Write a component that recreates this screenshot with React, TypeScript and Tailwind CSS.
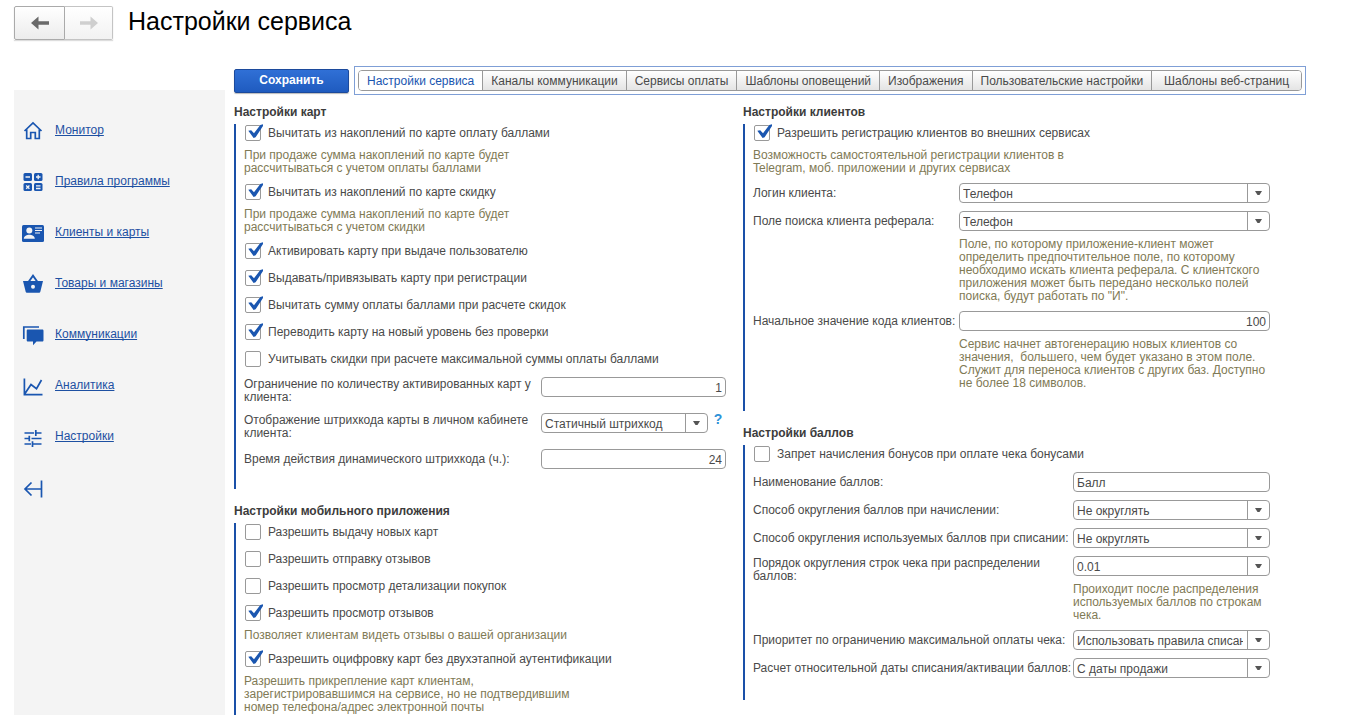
import { useId, type ReactNode } from 'react'
import clsx from 'clsx'

const TABS = [
  'Настройки сервиса',
  'Каналы коммуникации',
  'Сервисы оплаты',
  'Шаблоны оповещений',
  'Изображения',
  'Пользовательские настройки',
  'Шаблоны веб-страниц',
]

function Icon({ children }: { children: ReactNode }) {
  return (
    <svg width="24" height="24" viewBox="0 0 24 24" fill="none" stroke="#1a56b0" strokeWidth="1.7" aria-hidden="true" className="shrink-0">
      {children}
    </svg>
  )
}

const NAV = [
  {
    label: 'Монитор',
    icon: (
      <Icon>
        <path d="M3.5 11 12 3l8.5 8M5.7 9.500v9h4v-6h4.600v6h4v-9" />
      </Icon>
    ),
  },
  {
    label: 'Правила программы',
    icon: (
      <Icon>
        <g fill="#1a56b0" stroke="none">
          <rect x="2.5" y="2" width="8.500" height="8" rx="1.5" />
          <rect x="13" y="2" width="8.500" height="8" rx="1.5" />
          <rect x="2.5" y="12" width="8.500" height="8" rx="1.5" />
          <rect x="13" y="12" width="8.500" height="8" rx="1.5" />
        </g>
        <path d="M4.500 6H9M15 6h4.500M17.200 3.800v4.400M5.200 14.500l3.200 3.200M8.400 14.500l-3.200 3.200M15 14.800h4.500M15 17.500h4.500" stroke="#f4f4f4" strokeWidth="1.300" />
      </Icon>
    ),
  },
  {
    label: 'Клиенты и карты',
    icon: (
      <Icon>
        <rect x="1" y="3" width="22" height="17" rx="1.5" fill="#1a56b0" stroke="none" />
        <circle cx="8.3" cy="8.500" r="3" fill="#f4f4f4" stroke="none" />
        <path d="M2.800 16.800c0-2.600 3.200-4 5.500-4s5.500 1.400 5.500 4z" fill="#f4f4f4" stroke="none" />
        <path d="M14 6h7M14 8.500h7M14 11h5" stroke="#f4f4f4" strokeWidth="1.1" />
      </Icon>
    ),
  },
  {
    label: 'Товары и магазины',
    icon: (
      <Icon>
        <path d="M7.500 9 12 2.700 16.500 9" strokeWidth="1.9" />
        <path d="M2 8h20l-2.600 10.400c-.2.8-.8 1.300-1.600 1.300H6.200c-.8 0-1.400-.5-1.600-1.300z" fill="#1a56b0" stroke="none" />
        <circle cx="12" cy="13.700" r="2" fill="#f4f4f4" stroke="none" />
      </Icon>
    ),
  },
  {
    label: 'Коммуникации',
    icon: (
      <Icon>
        <path d="M2.800 15V3H18" />
        <path d="M7 5.500h14.200c.8 0 1.300.5 1.300 1.300v9.400c0 .8-.5 1.300-1.300 1.300H15.500L12 21.200V17.500H7c-.8 0-1.300-.5-1.300-1.300V6.800C5.700 6 6.200 5.500 7 5.500z" fill="#1a56b0" stroke="none" />
      </Icon>
    ),
  },
  {
    label: 'Аналитика',
    icon: (
      <Icon>
        <path d="M3.400 3.500v16.200H21.500M4 18.500 10 9.500l5.500 4.200L20.500 5" />
      </Icon>
    ),
  },
  {
    label: 'Настройки',
    icon: (
      <Icon>
        <path d="M3.500 7H13M14.800 4v6M15 7h5.500M3.500 12.500H7.500M8.300 9.800v5.400M10.500 12.500h10M3.500 18H10M11.500 15.300v5.700M12 18h8.500" />
      </Icon>
    ),
  },
]

function Heading({ children }: { children: ReactNode }) {
  return <h2 className="h-[18px] text-xs leading-[13px] font-bold text-[#3c3c3c]">{children}</h2>
}

function Panel({ children, className }: { children: ReactNode; className?: string }) {
  return <div className={clsx('border-l-2 border-[#1a50a8] pl-2', className)}>{children}</div>
}

function Check({ label, checked = false }: { label: string; checked?: boolean }) {
  return (
    <div className="h-[27px]">
      <label className="flex h-[18px] items-center">
        <span className="relative mr-1.5 h-4 w-[18px] shrink-0 pl-px">
          <input
            type="checkbox"
            defaultChecked={checked}
            className="peer block size-4 appearance-none rounded-xs border border-[#999] bg-white"
          />
          <svg
            viewBox="0 0 18 18"
            aria-hidden="true"
            className="pointer-events-none absolute -top-0.5 left-px hidden size-[18px] peer-checked:block"
          >
            <path d="M3.300 7.800 6.200 7.300 9 10.200 15.300 2 18 1.300V3L10.600 14.300 8.600 15z" fill="#1a56b0" />
          </svg>
        </span>
        {label}
      </label>
    </div>
  )
}

// Explanation under a checkbox
function Note({ children }: { children: ReactNode }) {
  return <p className="-mt-0.5 max-w-[330px] pb-2 text-[#7f7a55]">{children}</p>
}

type FieldProps = {
  label: string
  value: string
  kind?: 'select' | 'number' | 'text'
  labelClass: string
  twoLines?: boolean
  hint?: string
  help?: boolean
}

function Field({ label, value, kind = 'select', labelClass, twoLines, hint, help }: FieldProps) {
  const id = useId()
  return (
    <div className="flex items-start pb-2">
      <label htmlFor={id} className={clsx('shrink-0', twoLines ? 'py-px' : 'pt-1', labelClass)}>
        {label}
      </label>
      <div className="min-w-0 flex-1">
        <div className="flex items-start">
          {kind === 'select' ? (
            <div className="relative min-w-0 flex-1">
              <select
                id={id}
                className="block h-5 w-full appearance-none rounded-[4px] border border-[#999] bg-white pt-px pr-[26px] pl-[3px] text-xs"
              >
                <option>{value}</option>
              </select>
              <span className="pointer-events-none absolute inset-y-0 right-0 flex w-[23px] items-center justify-center border-l border-[#999] pr-px">
                <svg width="7" height="4" viewBox="0 0 7 4" aria-hidden="true">
                  <path d="M0 0h7L4.500 4h-2z" fill="#555" />
                </svg>
              </span>
            </div>
          ) : (
            <input
              id={id}
              type="text"
              defaultValue={value}
              className={clsx(
                'block h-5 w-full rounded-[4px] border border-[#999] bg-white px-[3px] pt-px text-xs',
                kind === 'number' && 'text-right',
              )}
            />
          )}
          {help && (
            <button type="button" aria-label="Справка" className="w-[18px] pl-0.5 text-sm leading-[13px] font-bold text-[#2f93d8]">
              ?
            </button>
          )}
        </div>
        {hint && <p className="pt-[7px] text-[#7f7a55]">{hint}</p>}
      </div>
    </div>
  )
}

function Header() {
  return (
    <header className="flex h-[46px] items-start pt-1.5 pl-3.5">
      <div className="flex shadow-[0_1px_1px_#ddd]">
        <button
          type="button"
          aria-label="Назад"
          className="flex h-[34px] w-[51px] items-center justify-center rounded-l-xs border border-[#aaa] bg-linear-to-b from-white to-[#ececec]"
        >
          <svg width="20" height="16" viewBox="0 0 20 16" aria-hidden="true">
            <path d="M1 8 8.500 1.500V6.200H19v3.600H8.500v4.700z" fill="#6a6a6a" />
          </svg>
        </button>
        <button
          type="button"
          aria-label="Вперед"
          className="flex h-[34px] w-12 items-center justify-center rounded-r-xs border border-l-0 border-[#c4c4c4] bg-linear-to-b from-white to-[#f2f2f2]"
        >
          <svg width="20" height="16" viewBox="0 0 20 16" aria-hidden="true">
            <path d="M19 8 11.500 1.500V6.200H1v3.600h10.500v4.700z" fill="#cfcfcf" />
          </svg>
        </button>
      </div>
      <h1 className="pl-[15px] text-[25px] leading-[30px] text-black">Настройки сервиса</h1>
    </header>
  )
}

function Sidebar() {
  return (
    <nav className="mt-11 w-[211px] shrink-0 bg-[#f4f4f4] pt-4 pl-[7px]">
      {NAV.map((item) => (
        <a key={item.label} href="#" className="flex h-[51px] items-center gap-2.5 text-[#1d50a2]">
          {item.icon}
          <span className="pb-[3px] underline underline-offset-1 [text-decoration-skip-ink:none]">{item.label}</span>
        </a>
      ))}
      <button type="button" aria-label="Свернуть меню" className="flex h-[51px] items-center">
        <Icon>
          <path d="M20.500 3.500v17M20 12H4M10.500 5.500 4 12l6.500 6.500" />
        </Icon>
      </button>
    </nav>
  )
}

function Toolbar() {
  return (
    <div className="mr-[61px] flex items-center gap-[5px]">
      <button
        type="button"
        className="h-6 w-[115px] shrink-0 rounded-xs border border-[#1c4a9c] bg-linear-to-b from-[#3070d6] to-[#1f5bbf] pb-0.5 text-xs font-bold text-white shadow-[0_1px_1px_#bbb]"
      >
        Сохранить
      </button>
      <div className="min-w-0 flex-1 border border-[#7f9fd6] p-[3px]">
        <div role="tablist" className="flex h-[21px] overflow-hidden rounded-[4px] border border-[#999]">
          {TABS.map((tab, i) => (
            <button
              key={tab}
              type="button"
              role="tab"
              aria-selected={i === 0}
              className={clsx(
                'px-2 pt-0.5 whitespace-nowrap',
                i === 0 ? 'bg-white text-[#1a56b0]' : 'border-l border-[#999] bg-linear-to-b from-white to-[#e4e4e4]',
                i === TABS.length - 1 && 'flex-1',
              )}
            >
              {tab}
            </button>
          ))}
        </div>
      </div>
    </div>
  )
}

export default function App() {
  return (
    <div className="flex min-h-screen flex-col bg-white font-['Liberation_Sans',Arial,sans-serif] text-xs leading-[13px] text-[#4a4a4a]">
      <Header />
      <div className="flex flex-1 pl-3.5">
        <Sidebar />
        <main className="flex min-w-0 flex-1 flex-col pt-5 pl-[9px]">
          <Toolbar />
          <div className="grid flex-1 grid-cols-[509fr_624fr] pt-[11px]">
            <div className="flex flex-col pr-[17px]">
              <Heading>Настройки карт</Heading>
              <Panel className="pb-3">
                <Check label="Вычитать из накоплений по карте оплату баллами" checked />
                <Note>При продаже сумма накоплений по карте будет рассчитываться с учетом оплаты баллами</Note>
                <Check label="Вычитать из накоплений по карте скидку" checked />
                <Note>При продаже сумма накоплений по карте будет рассчитываться с учетом скидки</Note>
                <Check label="Активировать карту при выдаче пользователю" checked />
                <Check label="Выдавать/привязывать карту при регистрации" checked />
                <Check label="Вычитать сумму оплаты баллами при расчете скидок" checked />
                <Check label="Переводить карту на новый уровень без проверки" checked />
                <Check label="Учитывать скидки при расчете максимальной суммы оплаты баллами" />
                <Field
                  label="Ограничение по количеству активированных карт у клиента:"
                  value="1"
                  kind="number"
                  labelClass="w-[297px]"
                  twoLines
                />
                <Field
                  label="Отображение штрихкода карты в личном кабинете клиента:"
                  value="Статичный штрихкод"
                  labelClass="w-[297px]"
                  twoLines
                  help
                />
                <Field label="Время действия динамического штрихкода (ч.):" value="24" kind="number" labelClass="w-[297px]" />
              </Panel>

              <div className="flex flex-1 flex-col pt-4">
                <Heading>Настройки мобильного приложения</Heading>
                <Panel className="flex-1">
                  <Check label="Разрешить выдачу новых карт" />
                  <Check label="Разрешить отправку отзывов" />
                  <Check label="Разрешить просмотр детализации покупок" />
                  <Check label="Разрешить просмотр отзывов" checked />
                  <Note>Позволяет клиентам видеть отзывы о вашей организации</Note>
                  <Check label="Разрешить оцифровку карт без двухэтапной аутентификации" checked />
                  <p className="-mt-0.5 max-w-[330px] text-[#7f7a55]">
                    Разрешить прикрепление карт клиентам, зарегистрировавшимся на сервисе, но не подтвердившим номер
                    телефона/адрес электронной почты
                  </p>
                </Panel>
              </div>
            </div>

            <div className="pr-[97px]">
              <Heading>Настройки клиентов</Heading>
              <Panel className="pb-[13px]">
                <Check label="Разрешить регистрацию клиентов во внешних сервисах" checked />
                <Note>Возможность самостоятельной регистрации клиентов в Telegram, моб. приложении и других сервисах</Note>
                <Field label="Логин клиента:" value="Телефон" labelClass="w-[206px]" />
                <Field
                  label="Поле поиска клиента реферала:"
                  value="Телефон"
                  labelClass="w-[206px]"
                  hint={'Поле, по которому приложение-клиент может определить предпочтительное поле, по которому необходимо искать клиента реферала. С клиентского приложения может быть передано несколько полей поиска, будут работать по "И".'}
                />
                <Field
                  label="Начальное значение кода клиентов:"
                  value="100"
                  kind="number"
                  labelClass="w-[206px]"
                  hint={'Сервис начнет автогенерацию новых клиентов со значения,\u00a0 большего, чем будет указано в этом поле. Служит для переноса клиентов с других баз. Доступно не более 18 символов.'}
                />
              </Panel>

              <div className="pt-4">
                <Heading>Настройки баллов</Heading>
                <Panel className="pb-3.5">
                  <Check label="Запрет начисления бонусов при оплате чека бонусами" />
                  <Field label="Наименование баллов:" value="Балл" kind="text" labelClass="w-[320px]" />
                  <Field label="Способ округления баллов при начислении:" value="Не округлять" labelClass="w-[320px]" />
                  <Field label="Способ округления используемых баллов при списании:" value="Не округлять" labelClass="w-[320px]" />
                  <Field
                    label="Порядок округления строк чека при распределении баллов:"
                    value="0.01"
                    labelClass="w-[320px]"
                    twoLines
                    hint="Проиходит после распределения используемых баллов по строкам чека."
                  />
                  <Field
                    label="Приоритет по ограничению максимальной оплаты чека:"
                    value="Использовать правила списания"
                    labelClass="w-[320px]"
                  />
                  <Field label="Расчет относительной даты списания/активации баллов:" value="С даты продажи" labelClass="w-[320px]" />
                </Panel>
              </div>
            </div>
          </div>
        </main>
      </div>
    </div>
  )
}
